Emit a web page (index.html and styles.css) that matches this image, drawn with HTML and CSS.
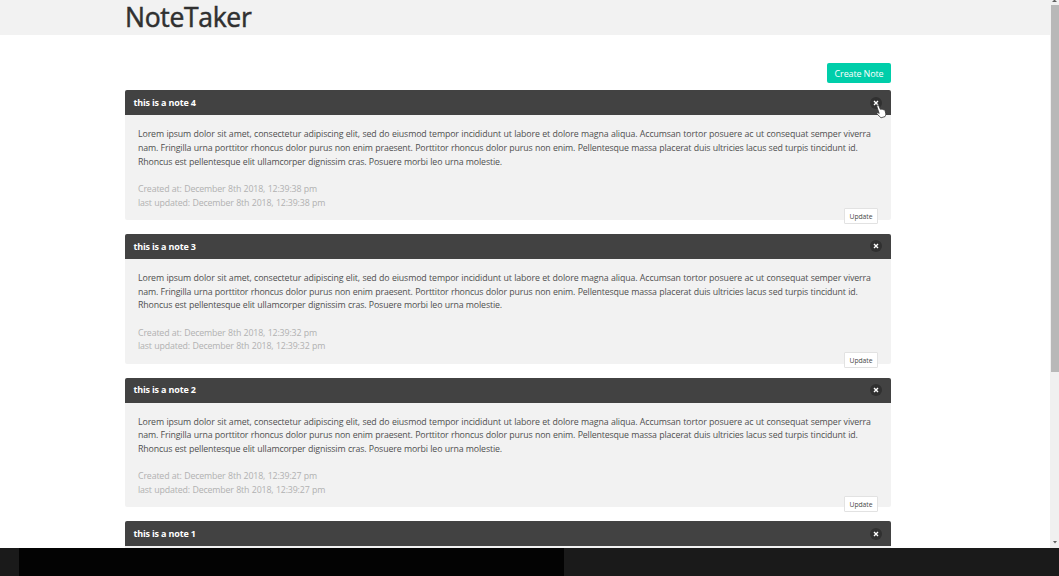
FILE: index.html
```
<!DOCTYPE html>
<html lang="en">
<head>
<meta charset="utf-8">
<title>NoteTaker</title>
<link rel="stylesheet" href="styles.css">
</head>
<body>
<div class="viewport">
  <div class="page">
    <header class="navbar"><h1 class="brand">NoteTaker</h1></header>
    <main class="container">
      <div class="toolbar"><button class="create">Create Note</button></div>
      <article class="note">
        <div class="note-header"><p>this is a note 4</p><button class="delete" aria-label="delete"><svg viewBox="0 0 12 12"><path d="M4 4l4 4M8 4l-4 4"/></svg></button></div>
        <div class="note-body">
          <p class="text"><span class="l1">Lorem ipsum dolor sit amet, consectetur adipiscing elit, sed do eiusmod tempor incididunt ut labore et dolore magna aliqua. Accumsan tortor posuere ac ut consequat semper viverra</span><br><span class="l2">nam. Fringilla urna porttitor rhoncus dolor purus non enim praesent. Porttitor rhoncus dolor purus non enim. Pellentesque massa placerat duis ultricies lacus sed turpis tincidunt id.</span><br><span class="l3">Rhoncus est pellentesque elit ullamcorper dignissim cras. Posuere morbi leo urna molestie.</span></p>
          <p class="dates">Created at: December 8th 2018, 12:39:38 pm<br>last updated: December 8th 2018, 12:39:38 pm</p>
          <button class="update">Update</button>
        </div>
      </article>
      <article class="note">
        <div class="note-header"><p>this is a note 3</p><button class="delete" aria-label="delete"><svg viewBox="0 0 12 12"><path d="M4 4l4 4M8 4l-4 4"/></svg></button></div>
        <div class="note-body">
          <p class="text"><span class="l1">Lorem ipsum dolor sit amet, consectetur adipiscing elit, sed do eiusmod tempor incididunt ut labore et dolore magna aliqua. Accumsan tortor posuere ac ut consequat semper viverra</span><br><span class="l2">nam. Fringilla urna porttitor rhoncus dolor purus non enim praesent. Porttitor rhoncus dolor purus non enim. Pellentesque massa placerat duis ultricies lacus sed turpis tincidunt id.</span><br><span class="l3">Rhoncus est pellentesque elit ullamcorper dignissim cras. Posuere morbi leo urna molestie.</span></p>
          <p class="dates">Created at: December 8th 2018, 12:39:32 pm<br>last updated: December 8th 2018, 12:39:32 pm</p>
          <button class="update">Update</button>
        </div>
      </article>
      <article class="note">
        <div class="note-header"><p>this is a note 2</p><button class="delete" aria-label="delete"><svg viewBox="0 0 12 12"><path d="M4 4l4 4M8 4l-4 4"/></svg></button></div>
        <div class="note-body">
          <p class="text"><span class="l1">Lorem ipsum dolor sit amet, consectetur adipiscing elit, sed do eiusmod tempor incididunt ut labore et dolore magna aliqua. Accumsan tortor posuere ac ut consequat semper viverra</span><br><span class="l2">nam. Fringilla urna porttitor rhoncus dolor purus non enim praesent. Porttitor rhoncus dolor purus non enim. Pellentesque massa placerat duis ultricies lacus sed turpis tincidunt id.</span><br><span class="l3">Rhoncus est pellentesque elit ullamcorper dignissim cras. Posuere morbi leo urna molestie.</span></p>
          <p class="dates">Created at: December 8th 2018, 12:39:27 pm<br>last updated: December 8th 2018, 12:39:27 pm</p>
          <button class="update">Update</button>
        </div>
      </article>
      <article class="note">
        <div class="note-header"><p>this is a note 1</p><button class="delete" aria-label="delete"><svg viewBox="0 0 12 12"><path d="M4 4l4 4M8 4l-4 4"/></svg></button></div>
        <div class="note-body"></div>
      </article>
    </main>
  </div>
  <div class="scrollbar">
    <svg class="arrow" viewBox="0 0 9 5"><path d="M3.500 0h2v1h1v1h-4V1h1z"/></svg>
    <div class="thumb"></div>
    <svg class="arrow" viewBox="0 0 9 5"><path d="M3 0h4L5 2.500z"/></svg>
  </div>
</div>
<footer class="desktop"><div class="shade"></div></footer>
<svg class="cursor" viewBox="0 0 12 15"><path d="M2.200 1.200c.8-.5 1.500 0 1.800.8l1.300 3.300c.6-.4 1.200-.3 1.600.2.6-.4 1.200-.2 1.600.4.7-.3 1.300 0 1.500.7l.7 2.600c.3 1.500-.2 2.400-.7 3.400l-4 1.200c-1-1.400-2.600-2.100-4-3.800-.6-.9.500-1.800 1.400-1.100l.8.5L2 3c-.2-.6-.3-1.400.2-1.800z"/></svg>
</body>
</html>
```
FILE: styles.css
```
* { box-sizing: border-box; margin: 0; padding: 0; }
body {
  width: 1059px; height: 576px; overflow: hidden; background: #fff;
  font: 9px/13.7px "Open Sans", "Noto Sans", sans-serif; color: #505050;
}
button { border: 0; font: inherit; }
.viewport { display: flex; height: 548px; }
.page { width: 1050px; height: 548px; overflow: hidden; }
.navbar { height: 35px; padding-left: 125px; background: #f2f2f2; }
.brand { font-size: 26.5px; line-height: 34px; font-weight: 500; letter-spacing: -.3px; color: #303030; -webkit-text-stroke: .5px #303030; }
.container { width: 766px; margin-left: 125px; }
.toolbar { display: flex; justify-content: flex-end; padding: 28px 0 7.3px; }
.create { width: 64px; height: 20px; border-radius: 2px; background: #00ceaa; color: #fff; white-space: nowrap; letter-spacing: -.15px; line-height: 21px; }
.note { height: 129.7px; margin-bottom: 14px; }
.note-header {
  display: flex; align-items: center; justify-content: space-between; height: 25px;
  padding: 0 9px 0 8.5px; border-radius: 2px 2px 0 0; background: #424242; color: #fff; font-weight: 700; letter-spacing: -.17px;
}
.delete { width: 12px; height: 12px; border-radius: 50%; background: #303030; }
.delete svg { display: block; width: 12px; height: 12px; }
.delete path { stroke: #fff; stroke-width: 1.4; }
.note-body { position: relative; height: 104.7px; padding: 12.9px 13px 0; background: #f2f2f2; border-radius: 0 0 2px 2px; white-space: nowrap; font-size: 8.8px; word-spacing: .3px; }
.l1 { letter-spacing: -.123px; }
.l2 { letter-spacing: -.15px; }
.l3 { letter-spacing: -.143px; }
.dates { margin-top: 13.7px; color: #b1b1b1; letter-spacing: -.145px; }
.update {
  position: absolute; right: 13px; bottom: -4.4px; width: 34px; height: 16px;
  border: 1px solid #e2e2e2; border-radius: 1px; background: #fff; color: #4a4a4a; font-size: 6.8px; line-height: 15px; letter-spacing: -.05px;
}
.scrollbar { display: flex; flex-direction: column; width: 9px; background: #f0f0f0; }
.arrow { display: block; width: 9px; height: 5px; fill: #606060; }
.thumb { width: 8px; height: 367px; margin: 0 0 169px 1px; background: #b8b8b8; }
.desktop { height: 28px; padding-left: 19px; background: #1a1a1a; }
.shade { width: 545px; height: 28px; background: #030303; }
.cursor { position: absolute; left: 875px; top: 104px; width: 12px; height: 15px; fill: #fff; stroke: #333; stroke-width: .8; }
```
